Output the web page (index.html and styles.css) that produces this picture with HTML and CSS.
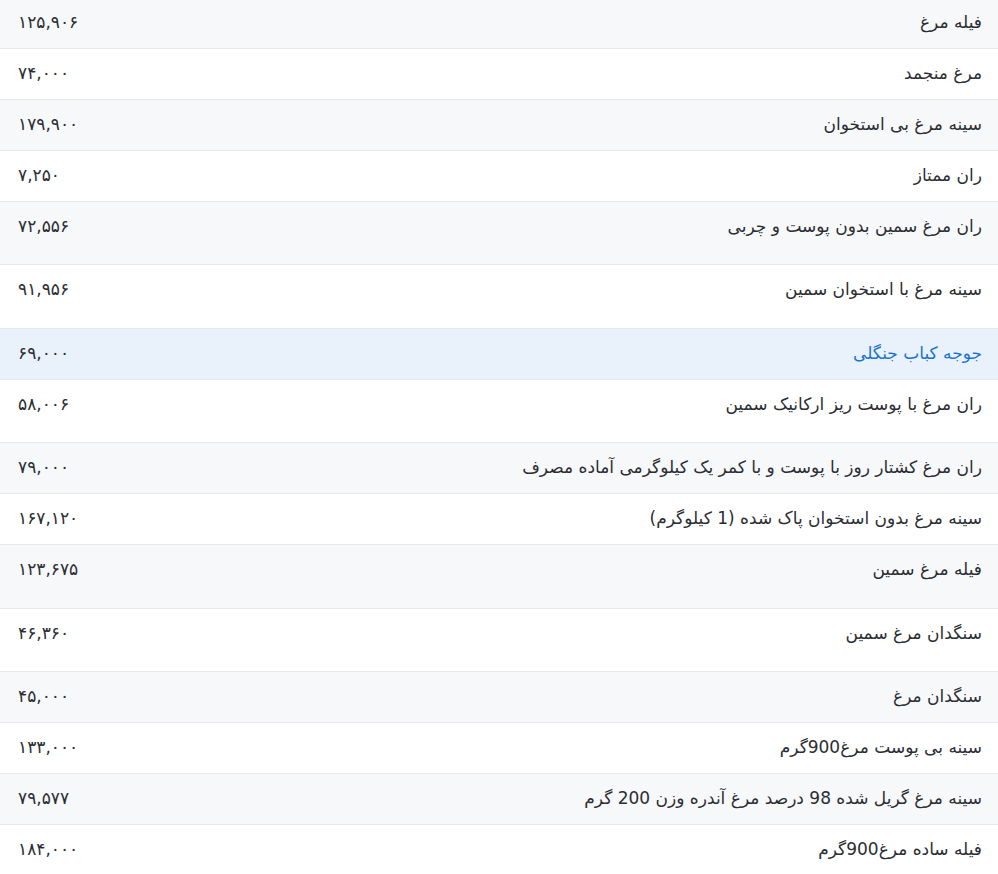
FILE: index.html
```html
<!DOCTYPE html>
<html lang="fa" dir="rtl">
<head>
<meta charset="utf-8">
<title>قیمت مرغ</title>
<link rel="stylesheet" href="styles.css">
</head>
<body>
<table class="prices">
<tbody>
<tr><td class="name">فیله مرغ</td><td class="price">۱۲۵,۹۰۶</td></tr>
<tr><td class="name">مرغ منجمد</td><td class="price">۷۴,۰۰۰</td></tr>
<tr><td class="name">سینه مرغ بی استخوان</td><td class="price">۱۷۹,۹۰۰</td></tr>
<tr><td class="name">ران ممتاز</td><td class="price">۷,۲۵۰</td></tr>
<tr class="tall"><td class="name">ران مرغ سمین بدون پوست و چربی</td><td class="price">۷۲,۵۵۶</td></tr>
<tr class="tall"><td class="name">سینه مرغ با استخوان سمین</td><td class="price">۹۱,۹۵۶</td></tr>
<tr class="active"><td class="name">جوجه کباب جنگلی</td><td class="price">۶۹,۰۰۰</td></tr>
<tr class="tall"><td class="name">ران مرغ با پوست ریز ارکانیک سمین</td><td class="price">۵۸,۰۰۶</td></tr>
<tr><td class="name">ران مرغ کشتار روز با پوست و با کمر یک کیلوگرمی آماده مصرف</td><td class="price">۷۹,۰۰۰</td></tr>
<tr><td class="name">سینه مرغ بدون استخوان پاک شده (1 کیلوگرم)</td><td class="price">۱۶۷,۱۲۰</td></tr>
<tr class="tall"><td class="name">فیله مرغ سمین</td><td class="price">۱۲۳,۶۷۵</td></tr>
<tr class="tall"><td class="name">سنگدان مرغ سمین</td><td class="price">۴۶,۳۶۰</td></tr>
<tr><td class="name">سنگدان مرغ</td><td class="price">۴۵,۰۰۰</td></tr>
<tr><td class="name">سینه بی پوست مرغ900گرم</td><td class="price">۱۳۳,۰۰۰</td></tr>
<tr><td class="name">سینه مرغ گریل شده 98 درصد مرغ آندره وزن 200 گرم</td><td class="price">۷۹,۵۷۷</td></tr>
<tr><td class="name">فیله ساده مرغ900گرم</td><td class="price">۱۸۴,۰۰۰</td></tr>
</tbody>
</table>
</body>
</html>
```

FILE: styles.css
```css
html, body {
  margin: 0;
  padding: 0;
  background: #ffffff;
}
body {
  font-family: "DejaVu Sans", "Noto Sans", sans-serif;
  font-size: 17px;
  color: #2b2d33;
}
.prices {
  width: 100%;
  border-collapse: collapse;
  margin-top: -3px;
}
.prices td {
  padding: 12px 16px 13px;
  line-height: 25px;
  vertical-align: top;
  border-top: 1px solid #e6e8ec;
}
.prices tr:nth-child(odd) {
  background: #f7f8fa;
}
.prices tr.tall td {
  padding-bottom: 25.4px;
}
.prices tr.active {
  background: #e9f1fb;
}
.prices tr.active .name {
  color: #1a73d4;
}
.prices .name {
  text-align: right;
}
.prices .price {
  text-align: left;
  direction: ltr;
  width: 140px;
  padding-left: 18px;
}
```
